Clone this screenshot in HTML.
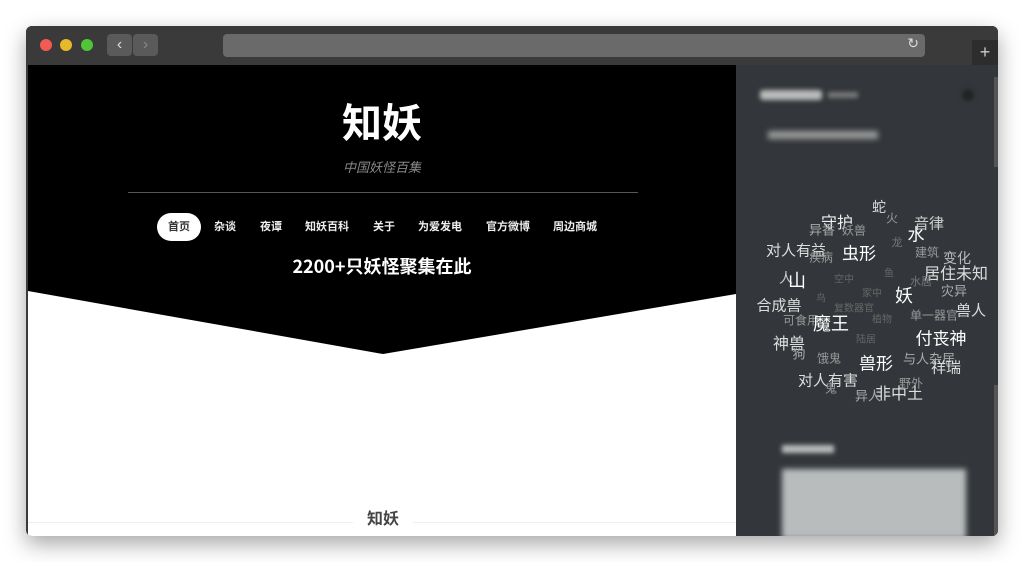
<!DOCTYPE html>
<html><head><meta charset="utf-8"><style>
*{margin:0;padding:0;box-sizing:border-box}
body{width:1024px;height:562px;background:#fff;position:relative;overflow:hidden;font-family:"Liberation Sans","Noto Sans CJK SC",sans-serif}
.win{position:absolute;left:26px;top:26px;width:972px;height:510px;border-radius:6px;background:#3b3b3b;box-shadow:0 8px 22px rgba(0,0,0,.35);overflow:hidden}
.tb{position:absolute;left:0;top:0;width:972px;height:39px;background:#3a3a3a}
.dot{position:absolute;top:13px;width:12px;height:12px;border-radius:50%}
.nb{position:absolute;top:8px;width:25px;height:22px;background:#5a5a5a;border-radius:4px;color:#ddd;font-size:16px;text-align:center;line-height:22px}
.url{position:absolute;left:197px;top:8px;width:702px;height:23px;background:#6a6a6a;border-radius:4px}
.page{position:absolute;left:2px;top:39px;width:708px;height:471px;background:#fff;overflow:hidden}
.side{position:absolute;left:710px;top:39px;width:262px;height:471px;background:#33373b;overflow:hidden}
.w{position:absolute;transform:translate(-50%,-50%);white-space:nowrap;font-family:"Noto Sans CJK SC",sans-serif}
.nav span{position:absolute;top:0;transform:translateX(-50%);color:#eee;font-size:11px;font-weight:bold;font-family:"Noto Sans CJK SC",sans-serif}
</style></head><body>
<div class="win">
 <div class="tb">
  <div class="dot" style="left:14px;background:#f25a55"></div>
  <div class="dot" style="left:34px;background:#e6b92a"></div>
  <div class="dot" style="left:55px;background:#50c538"></div>
  <div class="nb" style="left:81px">‹</div>
  <div class="nb" style="left:107px;color:#888">›</div>
  <div class="url"><span style="position:absolute;right:6px;top:1px;color:#ddd;font-size:14px">↻</span></div>
  <div style="position:absolute;left:946px;top:14px;width:26px;height:25px;background:#2d2d2d;color:#ccc;font-size:18px;text-align:center;line-height:24px">+</div>
 </div>
 <div class="page">
  <svg width="708" height="471" style="position:absolute;left:0;top:0"><polygon points="0,0 708,0 708,229 355,289 0,226" fill="#000"/></svg>
  <div style="position:absolute;left:0;width:708px;top:30px;text-align:center;color:#fff;font-size:40px;font-weight:bold;font-family:'Noto Sans CJK SC',sans-serif;line-height:50px">知妖</div>
  <div style="position:absolute;left:0;width:708px;top:92px;text-align:center;color:#888;font-size:13px;font-style:italic;font-family:'Noto Sans CJK SC',sans-serif">中国妖怪百集</div>
  <div style="position:absolute;left:100px;top:127px;width:510px;height:1px;background:#555"></div>
  <div style="position:absolute;left:129px;top:148px;width:44px;height:28px;border-radius:14px;background:#fff"></div>
  <div class="nav" style="position:absolute;left:0;top:153px;width:708px;height:20px">
   <span style="left:151px;color:#333">首页</span><span style="left:197px">杂谈</span><span style="left:243px">夜谭</span><span style="left:299px">知妖百科</span><span style="left:356px">关于</span><span style="left:412px">为爱发电</span><span style="left:480px">官方微博</span><span style="left:547px">周边商城</span>
  </div>
  <div style="position:absolute;left:0;width:708px;top:188px;text-align:center;color:#fff;font-size:18px;font-weight:bold;font-family:'Noto Sans CJK SC',sans-serif">2200+只妖怪聚集在此</div>
  <div style="position:absolute;left:0;top:457px;width:708px;height:1px;background:#eee"></div>
  <div style="position:absolute;left:325px;top:440px;width:60px;text-align:center;background:#fff;color:#444;font-size:16px;font-weight:bold;font-family:'Noto Sans CJK SC',sans-serif">知妖</div>
 </div>
 <div class="side">
  <div style="position:absolute;left:24px;top:25px;width:62px;height:10px;background:#bbb;filter:blur(2.5px);border-radius:3px"></div>
  <div style="position:absolute;left:92px;top:27px;width:30px;height:6px;background:#777;filter:blur(2px)"></div>
  <div style="position:absolute;left:226px;top:24px;width:12px;height:12px;background:#222;border-radius:50%;filter:blur(2px)"></div>
  <div style="position:absolute;left:32px;top:66px;width:110px;height:8px;background:#999;filter:blur(3px)"></div>
  <div style="position:absolute;left:258px;top:12px;width:4px;height:90px;background:#555"></div>
  <div style="position:absolute;left:46px;top:380px;width:52px;height:8px;background:#bbb;filter:blur(2.5px)"></div>
  <div style="position:absolute;left:46px;top:404px;width:184px;height:70px;background:#b8bcbd;filter:blur(3px)"></div>
  <div style="position:absolute;left:258px;top:320px;width:4px;height:150px;background:#555"></div>
  <div style="position:absolute;left:0;top:125px">
<span class="w" style="left:143px;top:17px;font-size:14px;color:#ddd">蛇</span>
<span class="w" style="left:156px;top:28px;font-size:12px;color:#999">火</span>
<span class="w" style="left:101px;top:31px;font-size:16px;color:#eee">守护</span>
<span class="w" style="left:86px;top:39px;font-size:13px;color:#aaa">异香</span>
<span class="w" style="left:118px;top:40px;font-size:12px;color:#999">妖兽</span>
<span class="w" style="left:193px;top:33px;font-size:15px;color:#ccc">音律</span>
<span class="w" style="left:180px;top:43px;font-size:17px;color:#fff">水</span>
<span class="w" style="left:161px;top:52px;font-size:11px;color:#777">龙</span>
<span class="w" style="left:60px;top:60px;font-size:15px;color:#ddd">对人有益</span>
<span class="w" style="left:123px;top:62px;font-size:17px;color:#fff">虫形</span>
<span class="w" style="left:85px;top:67px;font-size:12px;color:#999">疾病</span>
<span class="w" style="left:191px;top:62px;font-size:12px;color:#999">建筑</span>
<span class="w" style="left:221px;top:68px;font-size:14px;color:#bbb">变化</span>
<span class="w" style="left:220px;top:82px;font-size:16px;color:#ddd">居住未知</span>
<span class="w" style="left:50px;top:88px;font-size:14px;color:#ccc">人</span>
<span class="w" style="left:61px;top:90px;font-size:18px;color:#fff">山</span>
<span class="w" style="left:108px;top:88px;font-size:10px;color:#666">空中</span>
<span class="w" style="left:153px;top:82px;font-size:10px;color:#666">鱼</span>
<span class="w" style="left:185px;top:91px;font-size:11px;color:#777">水居</span>
<span class="w" style="left:218px;top:100px;font-size:13px;color:#aaa">灾异</span>
<span class="w" style="left:168px;top:105px;font-size:18px;color:#fff">妖</span>
<span class="w" style="left:85px;top:107px;font-size:10px;color:#666">鸟</span>
<span class="w" style="left:136px;top:102px;font-size:10px;color:#666">家中</span>
<span class="w" style="left:43px;top:115px;font-size:15px;color:#ddd">合成兽</span>
<span class="w" style="left:118px;top:117px;font-size:10px;color:#666">复数器官</span>
<span class="w" style="left:198px;top:125px;font-size:12px;color:#999">单一器官</span>
<span class="w" style="left:235px;top:120px;font-size:15px;color:#ddd">兽人</span>
<span class="w" style="left:65px;top:130px;font-size:12px;color:#999">可食用</span>
<span class="w" style="left:95px;top:133px;font-size:18px;color:#fff">魔王</span>
<span class="w" style="left:146px;top:128px;font-size:10px;color:#666">植物</span>
<span class="w" style="left:205px;top:147px;font-size:17px;color:#fff">付丧神</span>
<span class="w" style="left:53px;top:152px;font-size:16px;color:#ddd">神兽</span>
<span class="w" style="left:130px;top:148px;font-size:10px;color:#666">陆居</span>
<span class="w" style="left:63px;top:163px;font-size:13px;color:#aaa">狗</span>
<span class="w" style="left:93px;top:168px;font-size:12px;color:#999">饿鬼</span>
<span class="w" style="left:193px;top:168px;font-size:13px;color:#aaa">与人杂居</span>
<span class="w" style="left:140px;top:172px;font-size:17px;color:#fff">兽形</span>
<span class="w" style="left:210px;top:177px;font-size:15px;color:#ddd">祥瑞</span>
<span class="w" style="left:92px;top:190px;font-size:15px;color:#ddd">对人有害</span>
<span class="w" style="left:95px;top:198px;font-size:12px;color:#999">鬼</span>
<span class="w" style="left:175px;top:193px;font-size:12px;color:#999">野外</span>
<span class="w" style="left:163px;top:202px;font-size:16px;color:#ddd">非中土</span>
<span class="w" style="left:132px;top:205px;font-size:13px;color:#aaa">异人</span>
  </div>
 </div>
</div>
</body></html>
